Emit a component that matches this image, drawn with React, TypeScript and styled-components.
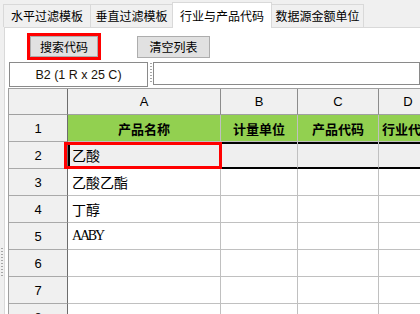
import React from "react";
import styled, { createGlobalStyle } from "styled-components";

const GlobalStyle = createGlobalStyle`
  html, body {
    margin: 0;
    padding: 0;
    background: #f0f0f0;
  }
  * {
    box-sizing: border-box;
  }
`;

const UI_FONT = `"Noto Sans CJK SC", "Liberation Sans", sans-serif`;
const LATIN_FONT = `"Liberation Sans", "Noto Sans CJK SC", sans-serif`;

const Window = styled.div`
  display: flex;
  flex-direction: column;

  width: 420px;
  height: 314px;
  overflow: hidden;

  font-family: ${UI_FONT};
  font-size: 12px;
  color: #000;
  background: #f0f0f0;
`;

const TabStrip = styled.div`
  display: flex;
  align-items: flex-end;
  flex-shrink: 0;

  height: 27px;
  padding-left: 3px;
`;

const Tab = styled.div<{ $active?: boolean; $w: number }>`
  position: relative;
  z-index: ${({ $active }) => ($active ? 1 : 0)};
  display: flex;
  align-items: center;
  justify-content: center;

  width: ${({ $w }) => $w}px;
  height: ${({ $active }) => ($active ? 26 : 23)}px;
  margin-bottom: ${({ $active }) => ($active ? -1 : 0)}px;

  border: 1px solid #d9d9d9;
  border-bottom: none;
  background: ${({ $active }) => ($active ? "#ffffff" : "#f0f0f0")};
  line-height: 1;

  & + & {
    margin-left: -1px;
  }
`;

const Body = styled.div`
  display: flex;
  flex: 1;
  min-height: 0;
`;

const LeftRail = styled.div`
  display: flex;
  flex-direction: column;
  align-items: flex-start;

  width: 4px;
  padding-left: 1px;
  flex-shrink: 0;
`;

const Grip = styled.div<{ $h: number; $top?: number }>`
  width: 2px;
  height: ${({ $h }) => $h}px;
  margin-top: ${({ $top = 0 }) => $top}px;
  background: repeating-linear-gradient(
    to bottom,
    #a6a6a6 0 1px,
    transparent 1px 3px
  );
`;

const Panel = styled.div`
  display: flex;
  flex-direction: column;
  flex: 1;
  min-width: 0;
  overflow: hidden;

  padding-top: 5px;
  border-top: 1px solid #d9d9d9;
  border-left: 1px solid #d9d9d9;
  background: #ffffff;
`;

const Toolbar = styled.div`
  display: flex;
  align-items: center;
  gap: 36px;

  height: 27px;
  padding-left: 22px;
`;

const RedFrame = styled.div`
  display: flex;
  border: 3px solid #ff0000;
`;

const Button = styled.div<{ $w: number; $h: number }>`
  display: flex;
  align-items: center;
  justify-content: center;

  width: ${({ $w }) => $w}px;
  height: ${({ $h }) => $h}px;

  border: 1px solid #adadad;
  background: #e1e1e1;
  font-size: 12px;
  line-height: 1;
`;

const NameRow = styled.div`
  display: flex;
  align-items: flex-start;

  margin-top: 2px;
  padding-left: 4px;
`;

const NameBox = styled.div`
  display: flex;
  align-items: center;
  justify-content: center;

  width: 139px;
  height: 25px;

  border: 1px solid #8a8a8a;
  background: #ffffff;
  font-family: ${LATIN_FONT};
  font-size: 12.5px;
  color: #1a1208;
`;

const Splitter = styled.div`
  display: flex;
  justify-content: center;

  width: 5px;
  padding-top: 1px;
`;

const FormulaBox = styled.div`
  flex: 1;
  height: 23px;

  border: 1px solid #8a8a8a;
  background: #ffffff;
`;

const Sheet = styled.div`
  display: grid;
  grid-template-columns: 59px 153px 77px 81px 59px;
  grid-template-rows: 26px;
  grid-auto-rows: 27px;

  width: max-content;
  margin-top: 1px;
  margin-left: 3px;

  border-top: 1px solid #a0a0a0;
  border-left: 1px solid #a0a0a0;
  background: #ffffff;
`;

const HeadCell = styled.div<{ $corner?: boolean }>`
  display: flex;
  align-items: center;
  justify-content: center;

  border-right: 1px solid ${({ $corner }) => ($corner ? "#6d6d6d" : "#8c8c8c")};
  border-bottom: 1px solid #a0a0a0;
  background: #f0f0f0;
  font-family: ${LATIN_FONT};
  font-size: 13px;
`;

const RowHead = styled.div`
  display: flex;
  align-items: center;
  justify-content: center;

  border-right: 1px solid #6d6d6d;
  border-bottom: 1px solid #a9a9a9;
  background: #f0f0f0;
  font-family: ${LATIN_FONT};
  font-size: 13px;
`;

type Tone = "plain" | "title" | "selected";

const Cell = styled.div<{ $tone?: Tone; $edge?: boolean }>`
  position: relative;
  display: flex;
  align-items: center;
  justify-content: ${({ $tone }) => ($tone === "title" ? "center" : "flex-start")};

  padding-left: ${({ $tone }) => ($tone === "title" ? 0 : 4)}px;
  border-right: 1px solid #c0c0c0;
  border-bottom: ${({ $tone }) =>
    $tone === "selected" ? "2px solid #000000" : "1px solid #c0c0c0"};
  background: ${({ $tone }) =>
    $tone === "title" ? "#92d050" : $tone === "selected" ? "#efefef" : "#ffffff"};
  box-shadow: ${({ $tone, $edge }) =>
    $tone === "selected"
      ? `inset 0 2px 0 #000000${$edge ? ", inset 2px 0 0 #000000" : ""}`
      : "none"};

  font-size: ${({ $tone }) => ($tone === "title" ? 13 : 14)}px;
  font-weight: ${({ $tone }) => ($tone === "title" ? 700 : 400)};
  white-space: nowrap;
`;

const SerifText = styled.span`
  font-family: "Liberation Serif", serif;
  font-size: 14px;
  letter-spacing: -2.2px;
`;

const RedMark = styled.span`
  position: absolute;
  z-index: 2;
  top: 0;
  left: -4px;
  right: -2px;
  bottom: -2px;
  border: 3px solid #ff0000;
  pointer-events: none;
`;

const columns = ["A", "B", "C", "D"];
const titles = ["产品名称", "计量单位", "产品代码", "行业代码"];

type Row = { text?: string; latin?: boolean };
const dataRows: Row[] = [
  { text: "乙酸" },
  { text: "乙酸乙酯" },
  { text: "丁醇" },
  { text: "AABY", latin: true },
  {},
  {},
  {},
  {},
];

const tabs = [
  { label: "水平过滤模板", w: 88 },
  { label: "垂直过滤模板", w: 83 },
  { label: "行业与产品代码", w: 100, active: true },
  { label: "数据源金额单位", w: 93 },
];

const App: React.FC = () => {
  return (
    <Window>
      <GlobalStyle />
      <TabStrip>
        {tabs.map((t) => (
          <Tab key={t.label} $w={t.w} $active={t.active}>
            {t.label}
          </Tab>
        ))}
      </TabStrip>
      <Body>
        <LeftRail>
          <Grip $h={30} $top={221} />
        </LeftRail>
        <Panel>
          <Toolbar>
            <RedFrame>
              <Button $w={68} $h={21}>搜索代码</Button>
            </RedFrame>
            <Button $w={73} $h={22}>清空列表</Button>
          </Toolbar>
          <NameRow>
            <NameBox>B2 (1 R x 25 C)</NameBox>
            <Splitter>
              <Grip $h={21} />
            </Splitter>
            <FormulaBox />
          </NameRow>
          <Sheet>
            <HeadCell $corner />
            {columns.map((c) => (
              <HeadCell key={c}>{c}</HeadCell>
            ))}

            <RowHead>1</RowHead>
            {titles.map((t) => (
              <Cell key={t} $tone="title">
                {t}
              </Cell>
            ))}

            {dataRows.map((row, i) => {
              const selected = i === 0;
              return (
                <React.Fragment key={i}>
                  <RowHead>{i + 2}</RowHead>
                  {columns.map((c, ci) => (
                    <Cell
                      key={c}
                      $tone={selected ? "selected" : "plain"}
                      $edge={selected && ci === 0}
                    >
                      {ci === 0 && row.text &&
                        (row.latin ? <SerifText>{row.text}</SerifText> : row.text)}
                      {selected && ci === 0 && <RedMark />}
                    </Cell>
                  ))}
                </React.Fragment>
              );
            })}
          </Sheet>
        </Panel>
      </Body>
    </Window>
  );
};

export default App;
